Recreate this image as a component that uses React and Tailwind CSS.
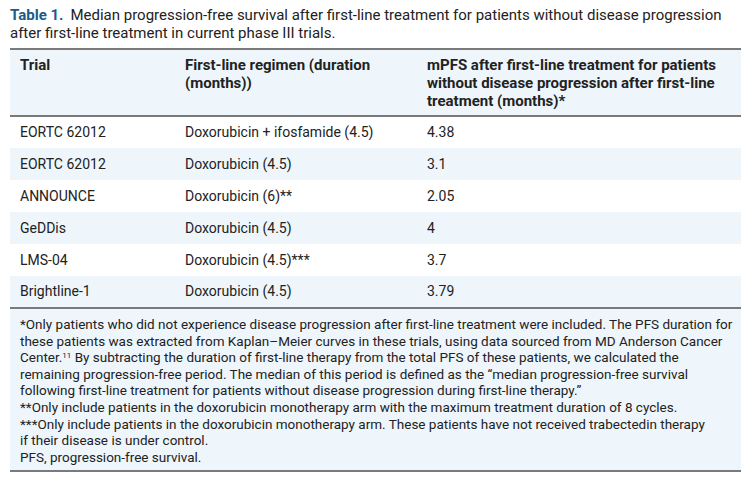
import React from 'react';

const rows = [
    ['EORTC 62012', 'Doxorubicin + ifosfamide (4.5)', '4.38'],
    ['EORTC 62012', 'Doxorubicin (4.5)', '3.1'],
    ['ANNOUNCE', 'Doxorubicin (6)**', '2.05'],
    ['GeDDis', 'Doxorubicin (4.5)', '4'],
    ['LMS-04', 'Doxorubicin (4.5)***', '3.7'],
    ['Brightline-1', 'Doxorubicin (4.5)', '3.79'],
];

const App = () => {
    return (
        <div className="w-[752px] h-[480px] bg-white px-[10px] pt-[6px] text-[#222] font-['Roboto',sans-serif]">
            {/* CAPTION */}
            <p className="text-[15px] leading-[18px]">
                <span className="font-bold text-[#1a5b8c] mr-[7px]">Table 1.</span>Median progression-free survival after first-line treatment for patients without disease progression
                <br />after first-line treatment in current phase III trials.
            </p>

            <table className="mt-[6px] w-[731px] border-collapse table-fixed">
                <colgroup>
                    <col className="w-[175px]" />
                    <col className="w-[242px]" />
                    <col className="w-[314px]" />
                </colgroup>
                <thead>
                    <tr className="bg-[#eef6fc] border-t-2 border-b-2 border-[#7a7a7a] align-top">
                        <th className="text-left font-bold text-[15px] leading-[18px] pl-[10px] pt-[6px] pb-[5px]">Trial</th>
                        <th className="text-left font-bold text-[15px] leading-[18px] pt-[6px] pb-[5px] whitespace-nowrap">First-line regimen (duration<br />(months))</th>
                        <th className="text-left font-bold text-[15px] leading-[18px] pt-[6px] pb-[5px] whitespace-nowrap">mPFS after first-line treatment for patients<br />without disease progression after first-line<br />treatment (months)*</th>
                    </tr>
                </thead>
                <tbody>
                    {rows.map((r, i) => (
                        <tr key={i} className={i % 2 === 1 ? 'bg-[#eef6fc] h-[32px]' : 'h-[32px]'}>
                            <td className="pl-[10px] text-[14px]">{r[0]}</td>
                            <td className="text-[14px]">{r[1]}</td>
                            <td className="text-[14px]">{r[2]}</td>
                        </tr>
                    ))}
                </tbody>
                <tfoot>
                    <tr className="bg-[#eef6fc] border-t-2 border-b-2 border-[#7a7a7a]">
                        <td colSpan={3} className="pl-[10px] pt-[7px] pb-[5px] text-[13.5px] leading-[16.6px] whitespace-nowrap">
                            *Only patients who did not experience disease progression after first-line treatment were included. The PFS duration for
                            <br />these patients was extracted from Kaplan–Meier curves in these trials, using data sourced from MD Anderson Cancer
                            <br />Center.<sup className="text-[8px]">11</sup> By subtracting the duration of first-line therapy from the total PFS of these patients, we calculated the
                            <br />remaining progression-free period. The median of this period is defined as the “median progression-free survival
                            <br />following first-line treatment for patients without disease progression during first-line therapy.”
                            <br />**Only include patients in the doxorubicin monotherapy arm with the maximum treatment duration of 8 cycles.
                            <br />***Only include patients in the doxorubicin monotherapy arm. These patients have not received trabectedin therapy
                            <br />if their disease is under control.
                            <br />PFS, progression-free survival.
                        </td>
                    </tr>
                </tfoot>
            </table>
        </div>
    );
};

export default App;
